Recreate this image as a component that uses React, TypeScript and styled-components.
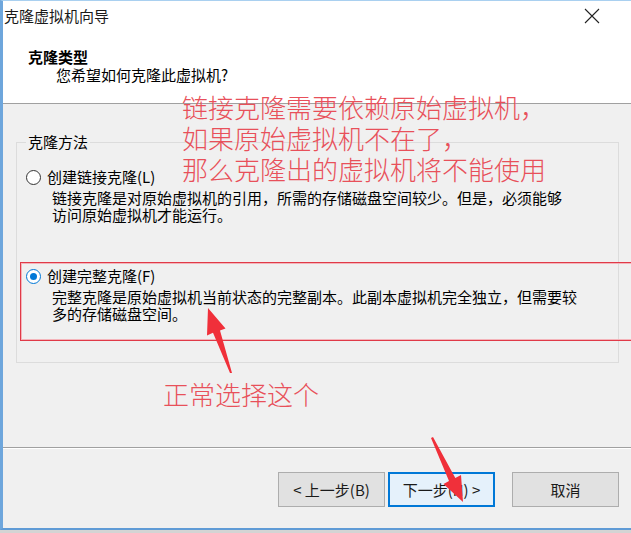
import * as React from 'react';
import styled, { createGlobalStyle } from 'styled-components';

const GlobalStyle = createGlobalStyle`
  html, body {
    margin: 0;
    padding: 0;
    background: #d4d4d4;
  }
  body {
    font-family: "Noto Sans CJK SC", "Microsoft YaHei", sans-serif;
  }
`;

const Window = styled.div`
  position: relative;
  width: 628px;
  height: 527px;
  border-left: 3px solid #6ea6dc;
  border-top: 1px solid #a9d0f0;
  border-bottom: 2px solid #5f9bd6;
  display: flex;
  flex-direction: column;
  background: #f0f0f0;
  overflow: hidden;
  color: #000;
  font-size: 15px;
  line-height: 17px;
`;

const TitleBar = styled.div`
  height: 29px;
  display: flex;
  align-items: center;
  justify-content: space-between;
  padding-left: 1px;
  background: #fff;
`;

const Title = styled.div`
  font-size: 15px;
  color: #1a1a1a;
`;

const CloseButton = styled.div`
  width: 46px;
  height: 29px;
  display: flex;
  align-items: center;
  justify-content: center;
  margin-right: 16px;
`;

const Header = styled.div`
  height: 74px;
  background: #fff;
  padding: 18px 0 0 25px;
  box-sizing: border-box;
  border-bottom: 1px solid #a0a0a0;
`;

const HeaderTitle = styled.div`
  font-weight: bold;
  line-height: 18px;
`;

const HeaderSub = styled.div`
  margin-left: 28px;
  line-height: 18px;
`;

const Body = styled.div`
  height: 344px;
  padding: 29px 12px 0 13px;
  box-sizing: border-box;
  border-bottom: 1px solid #a0a0a0;
`;

const Group = styled.fieldset`
  margin: 0;
  padding: 0 0 0 9px;
  height: 230px;
  box-sizing: border-box;
  border: 1px solid #dcdcdc;
  display: flex;
  flex-direction: column;
`;

const Legend = styled.legend`
  margin-left: 0;
  padding: 0 2px;
  line-height: 18px;
`;

const Option = styled.div<{ $top: number }>`
  margin-top: ${p => p.$top}px;
`;

const OptionLabel = styled.div`
  display: flex;
  align-items: center;
  gap: 6px;
  line-height: 18px;
`;

const Radio = styled.span<{ $checked?: boolean }>`
  width: 13px;
  height: 13px;
  border-radius: 50%;
  border: 1px solid ${p => (p.$checked ? '#0078d7' : '#333')};
  background: #fff;
  display: flex;
  align-items: center;
  justify-content: center;
  &::after {
    content: '';
    width: 7px;
    height: 7px;
    border-radius: 50%;
    background: ${p => (p.$checked ? '#0078d7' : 'transparent')};
  }
`;

const OptionDesc = styled.div`
  margin: 3px 0 0 26px;
  white-space: nowrap;
  line-height: 17px;
`;

const Footer = styled.div`
  flex: 1;
  display: flex;
  justify-content: flex-end;
  align-items: flex-start;
  padding: 23px 12px 0 0;
  border-top: 1px solid #fff;
`;

const Button = styled.div<{ $focus?: boolean; $gap?: number }>`
  flex: 0 0 107px;
  height: 35px;
  box-sizing: border-box;
  display: flex;
  align-items: center;
  justify-content: center;
  margin-left: ${p => p.$gap ?? 0}px;
  background: ${p => (p.$focus ? '#e5f1fb' : '#e1e1e1')};
  border: ${p => (p.$focus ? '2px solid #0078d7' : '1px solid #adadad')};
  font-size: 15px;
  color: #1a1a1a;
`;

const Note = styled.div<{ $x: number; $y: number }>`
  position: absolute;
  left: ${p => p.$x}px;
  top: ${p => p.$y}px;
  color: #e8505a;
  font-size: 26px;
  line-height: 31px;
  font-weight: 300;
  white-space: nowrap;
`;

const Highlight = styled.div`
  position: absolute;
  left: 17px;
  top: 261px;
  width: 620px;
  height: 77px;
  border: 1px solid #e03a48;
  box-shadow: inset 0 0 0 1px #f4b4ba;
`;

const Overlay = styled.svg`
  position: absolute;
  left: -3px;
  top: -1px;
  pointer-events: none;
`;

export default function App() {
  return (
    <>
      <GlobalStyle />
      <Window>
        <TitleBar>
          <Title>克隆虚拟机向导</Title>
          <CloseButton>
            <svg width="16" height="16" viewBox="0 0 16 16">
              <path d="M1 1 L15 15 M15 1 L1 15" stroke="#222" strokeWidth="1.1" />
            </svg>
          </CloseButton>
        </TitleBar>
        <Header>
          <HeaderTitle>克隆类型</HeaderTitle>
          <HeaderSub>您希望如何克隆此虚拟机?</HeaderSub>
        </Header>
        <Body>
          <Group>
            <Legend>克隆方法</Legend>
            <Option $top={17}>
              <OptionLabel>
                <Radio />
                创建链接克隆(L)
              </OptionLabel>
              <OptionDesc>
                链接克隆是对原始虚拟机的引用，所需的存储磁盘空间较少。但是，必须能够
                <br />
                访问原始虚拟机才能运行。
              </OptionDesc>
            </Option>
            <Option $top={44}>
              <OptionLabel>
                <Radio $checked />
                创建完整克隆(F)
              </OptionLabel>
              <OptionDesc>
                完整克隆是原始虚拟机当前状态的完整副本。此副本虚拟机完全独立，但需要较
                <br />
                多的存储磁盘空间。
              </OptionDesc>
            </Option>
          </Group>
        </Body>
        <Footer>
          <Button>&lt; 上一步(B)</Button>
          <Button $focus $gap={3}>下一步(N) &gt;</Button>
          <Button $gap={17}>取消</Button>
        </Footer>

        <Highlight />
        <Note $x={179} $y={90}>
          链接克隆需要依赖原始虚拟机，
          <br />
          如果原始虚拟机不在了，
          <br />
          那么克隆出的虚拟机将不能使用
        </Note>
        <Note $x={160} $y={377}>正常选择这个</Note>
        <Overlay width="631" height="533" viewBox="0 0 631 533">
          <polygon
            points="208,308 225.5,328.6 220,330.4 232,373 230,373 213,332.8 207,335.5"
            fill="#f0303a"
          />
          <polygon
            points="463,502 443.5,484 449,481 431,438 433,437 455.3,478 461,475"
            fill="#f0303a"
          />
        </Overlay>
      </Window>
    </>
  );
}
